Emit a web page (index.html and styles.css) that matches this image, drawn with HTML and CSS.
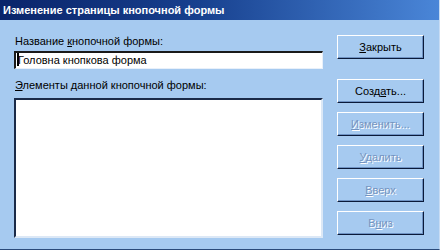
FILE: index.html
```html
<!DOCTYPE html>
<html>
<head>
    <title>Изменение страницы кнопочной формы</title>
    <link rel="stylesheet" href="styles.css">
</head>
<body>
    <div class="window">
        <div class="titlebar">Изменение страницы кнопочной формы</div>

        <div class="content">
            <div class="main">
                <label class="caption">Название <u>к</u>нопочной формы:</label>
                <div class="textbox"><span class="caret"></span>Головна кнопкова форма</div>

                <label class="caption second"><u>Э</u>лементы данной кнопочной формы:</label>
                <div class="listbox"></div>
            </div>

            <div class="buttons">
                <button class="btn"><u>З</u>акрыть</button>
                <button class="btn first">Созд<u>а</u>ть...</button>
                <button class="btn disabled"><u>И</u>зменить...</button>
                <button class="btn disabled"><u>У</u>далить</button>
                <button class="btn disabled"><u>В</u>верх</button>
                <button class="btn disabled">В<u>н</u>из</button>
            </div>
        </div>
    </div>
</body>
</html>
```

FILE: styles.css
```css
body {
    margin: 0;
    padding: 0;
    background-color: #a6caf0;
    font-family: Tahoma, "Liberation Sans", sans-serif;
    font-size: 11px;
}

.window {
    width: 440px;
    height: 250px;
    box-sizing: border-box;
    background-color: #a6caf0;
    border-right: 1px solid #c8dcf4;
    border-bottom: 1px solid #2a4a7a;
}

.titlebar {
    height: 20px;
    line-height: 20px;
    padding-left: 3px;
    color: white;
    font-weight: bold;
    font-size: 11px;
    background: linear-gradient(to right, #0a246a 0%, #17408e 45%, #4a86d8 100%);
    white-space: nowrap;
}

.content {
    display: flex;
    padding: 15px 0 0 14px;
}

.main {
    width: 309px;
}

.caption {
    display: block;
    height: 13px;
    line-height: 13px;
    padding-left: 1px;
    color: black;
}

.caption.second {
    margin-top: 10px;
}

.textbox {
    height: 18px;
    line-height: 14px;
    margin-top: 3px;
    box-sizing: border-box;
    background-color: white;
    border-top: 2px solid #1a1a1a;
    border-left: 2px solid #1a1a1a;
    border-right: 1px solid #e8f0fa;
    border-bottom: 1px solid #e8f0fa;
    padding-left: 1px;
    color: black;
    white-space: nowrap;
}

.caret {
    display: inline-block;
    width: 2px;
    height: 13px;
    background-color: black;
    vertical-align: -2px;
    margin-right: -1px;
}

.listbox {
    height: 140px;
    margin-top: 6px;
    box-sizing: border-box;
    background-color: white;
    border-top: 2px solid #1a2a48;
    border-left: 2px solid #1a2a48;
    border-right: 2px solid #dce8f6;
    border-bottom: 2px solid #dce8f6;
}

.buttons {
    display: flex;
    flex-direction: column;
    margin-left: 14px;
    gap: 9px;
}

.btn {
    width: 87px;
    height: 24px;
    padding: 0;
    font-family: inherit;
    font-size: 11px;
    color: black;
    background-color: #a6caf0;
    border: 1px solid;
    border-color: #ffffff #0a1a3a #0a1a3a #ffffff;
    box-shadow: inset -1px -1px 0 #6f93c4;
}

.btn.first {
    margin-top: 11px;
}

.btn.disabled {
    color: #7594c0;
    text-shadow: 1px 1px 0 #ffffff;
}
```
